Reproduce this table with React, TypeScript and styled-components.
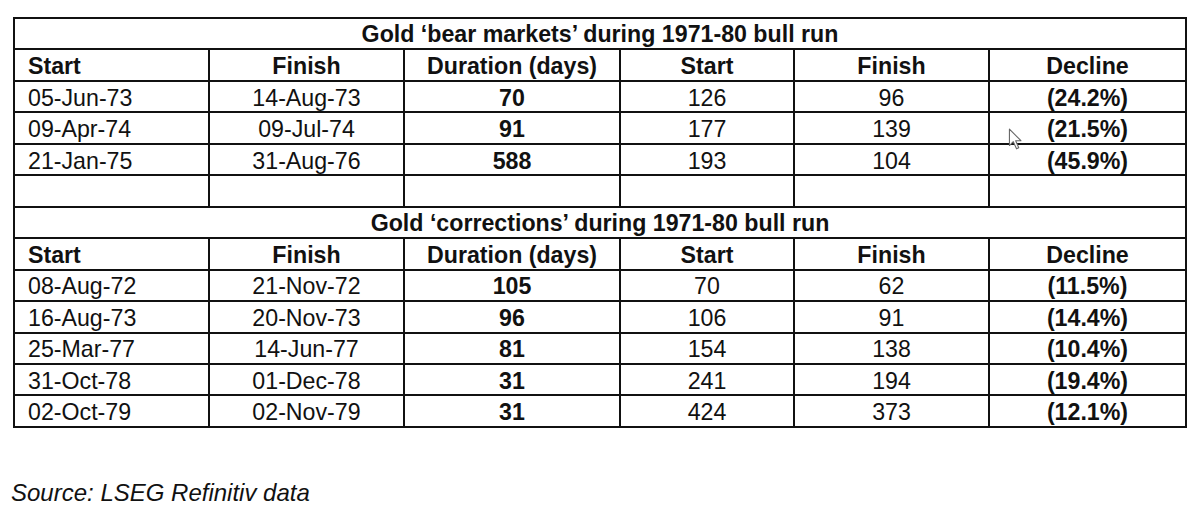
import React from "react";
import styled, { createGlobalStyle } from "styled-components";

const GlobalStyle = createGlobalStyle`
  html, body {
    margin: 0;
    padding: 0;
    background: #ffffff;
  }
  body {
    font-family: "Liberation Sans", Arial, sans-serif;
    color: #111;
  }
`;

const Page = styled.div`
  position: relative;
  width: 1200px;
  height: 511px;
  padding: 17px 0 0 13px;
  box-sizing: border-box;
  background: #fff;
`;

const Table = styled.table`
  width: 1172px;
  border-collapse: collapse;
  table-layout: fixed;
  border: 2px solid #111;
  font-size: 23.2px;
`;

const Row = styled.tr`
  height: 31.46px;
`;

const Title = styled.td`
  border: 2px solid #111;
  text-align: center;
  font-weight: bold;
  padding: 1px 0 0;
  line-height: 26px;
  vertical-align: middle;
`;

const Cell = styled.td<{ $bold?: boolean; $left?: boolean }>`
  border: 2px solid #111;
  padding: 2px 0 0 ${(p) => (p.$left ? "13px" : "0")};
  text-align: ${(p) => (p.$left ? "left" : "center")};
  font-weight: ${(p) => (p.$bold ? "bold" : "normal")};
  line-height: 26px;
  vertical-align: middle;
  white-space: nowrap;
`;

const Source = styled.p`
  margin: 51px 0 0 -2px;
  font-size: 24px;
  font-style: italic;
  color: #111;
  line-height: 28px;
`;

const Cursor = styled.svg`
  position: absolute;
  left: 1008px;
  top: 128px;
  width: 16px;
  height: 23px;
`;

type DataRow = [string, string, string, string, string, string];

const bearRows: DataRow[] = [
  ["05-Jun-73", "14-Aug-73", "70", "126", "96", "(24.2%)"],
  ["09-Apr-74", "09-Jul-74", "91", "177", "139", "(21.5%)"],
  ["21-Jan-75", "31-Aug-76", "588", "193", "104", "(45.9%)"],
];

const correctionRows: DataRow[] = [
  ["08-Aug-72", "21-Nov-72", "105", "70", "62", "(11.5%)"],
  ["16-Aug-73", "20-Nov-73", "96", "106", "91", "(14.4%)"],
  ["25-Mar-77", "14-Jun-77", "81", "154", "138", "(10.4%)"],
  ["31-Oct-78", "01-Dec-78", "31", "241", "194", "(19.4%)"],
  ["02-Oct-79", "02-Nov-79", "31", "424", "373", "(12.1%)"],
];

const widths = [195, 195, 216, 174, 195, 197];

const Header = () => (
  <Row>
    <Cell $left $bold>Start</Cell>
    <Cell $bold>Finish</Cell>
    <Cell $bold>Duration (days)</Cell>
    <Cell $bold>Start</Cell>
    <Cell $bold>Finish</Cell>
    <Cell $bold>Decline</Cell>
  </Row>
);

const DataRows = ({ rows }: { rows: DataRow[] }) => (
  <>
    {rows.map((r) => (
      <Row key={r[0]}>
        <Cell $left>{r[0]}</Cell>
        <Cell>{r[1]}</Cell>
        <Cell $bold>{r[2]}</Cell>
        <Cell>{r[3]}</Cell>
        <Cell>{r[4]}</Cell>
        <Cell $bold>{r[5]}</Cell>
      </Row>
    ))}
  </>
);

export default function App() {
  return (
    <>
      <GlobalStyle />
      <Page>
        <Table>
          <colgroup>
            {widths.map((w, i) => (
              <col key={i} style={{ width: w }} />
            ))}
          </colgroup>
          <tbody>
            <Row>
              <Title colSpan={6}>Gold ‘bear markets’ during 1971-80 bull run</Title>
            </Row>
            <Header />
            <DataRows rows={bearRows} />
            <Row>
              <Cell />
              <Cell />
              <Cell />
              <Cell />
              <Cell />
              <Cell />
            </Row>
            <Row>
              <Title colSpan={6}>Gold ‘corrections’ during 1971-80 bull run</Title>
            </Row>
            <Header />
            <DataRows rows={correctionRows} />
          </tbody>
        </Table>
        <Source>Source: LSEG Refinitiv data</Source>
        <Cursor viewBox="0 0 14 21">
          <path
            d="M1 1 L1 16 L4.5 12.5 L7.5 19 L9.5 18 L6.7 11.6 L11.5 11.6 Z"
            fill="#fff"
            stroke="#666"
            strokeWidth="1"
            strokeLinejoin="round"
          />
        </Cursor>
      </Page>
    </>
  );
}
